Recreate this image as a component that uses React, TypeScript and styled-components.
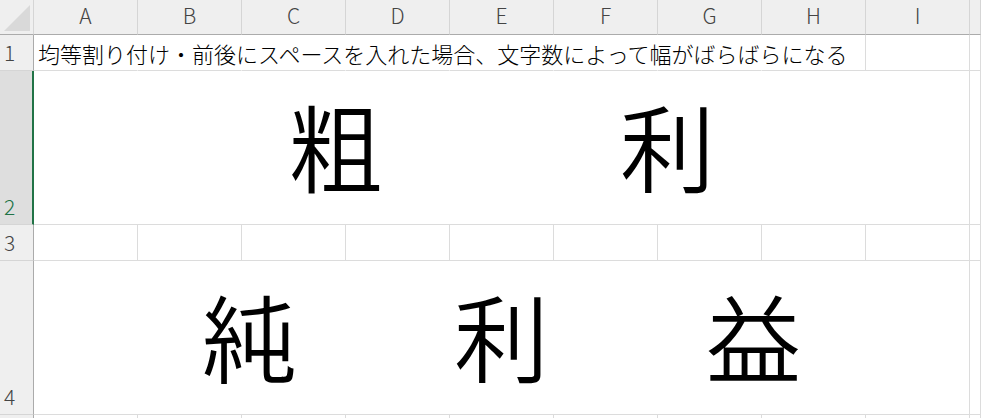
import React from "react";
import styled, { createGlobalStyle } from "styled-components";

const GlobalStyle = createGlobalStyle`
  html, body { margin: 0; padding: 0; background: #ffffff; }
  body { font-family: "Noto Sans CJK JP", "Noto Sans", sans-serif; }
  #root { width: 981px; height: 418px; overflow: hidden; }
`;

const GRID = "#dcdcdc";
const HEAD_BG = "#efefef";
const HEAD_LINE = "#ababab";
const GREEN = "#217346";

const Sheet = styled.div`
  display: grid;
  grid-template-columns: 34px repeat(9, 104px) 1fr;
  grid-template-rows: 35px 36px 154px 36px 154px 1fr;
  width: 981px;
  height: 418px;
  overflow: hidden;
`;

const Corner = styled.div`
  background: ${HEAD_BG};
  border-right: 1px solid #d5d5d5;
  border-bottom: 1px solid ${HEAD_LINE};
  box-sizing: border-box;
  display: flex;
  align-items: flex-end;
  justify-content: flex-end;
  padding: 0 3px 3px 0;
`;

const ColHeader = styled.div`
  background: ${HEAD_BG};
  border-right: 1px solid #d5d5d5;
  border-bottom: 1px solid ${HEAD_LINE};
  box-sizing: border-box;
  display: flex;
  align-items: center;
  justify-content: center;
  padding-bottom: 3px;
  font-size: 21px;
  font-weight: 300;
  line-height: 1;
  color: #444444;
`;

const RowHeader = styled.div<{ $selected?: boolean }>`
  background: ${(p) => (p.$selected ? "#dedede" : HEAD_BG)};
  border-right: ${(p) => (p.$selected ? `2px solid ${GREEN}` : `1px solid ${HEAD_LINE}`)};
  border-bottom: 1px solid #d5d5d5;
  box-sizing: border-box;
  display: flex;
  align-items: flex-end;
  padding: 0 0 7px 4px;
  font-size: 21px;
  font-weight: 300;
  line-height: 1;
  color: ${(p) => (p.$selected ? GREEN : "#444444")};
`;

const Cell = styled.div<{ $noRight?: boolean }>`
  border-right: 1px solid ${(p) => (p.$noRight ? "transparent" : GRID)};
  border-bottom: 1px solid ${GRID};
  box-sizing: border-box;
  min-width: 0;
`;

const TextCell = styled(Cell)`
  display: flex;
  align-items: center;
  padding-left: 4px;
  white-space: nowrap;
  overflow: visible;
  font-size: 22px;
  font-weight: 300;
  line-height: 1;
  color: #000000;
`;

const MergedCell = styled.div<{ $pad: number }>`
  grid-column: span 9;
  border-right: 1px solid ${GRID};
  border-bottom: 1px solid ${GRID};
  box-sizing: border-box;
  display: flex;
  align-items: center;
  justify-content: space-between;
  padding: 0 ${(p) => p.$pad}px 6px;
`;

const BigChar = styled.span`
  font-size: 95px;
  font-weight: 350;
  line-height: 1;
  color: #000000;
`;

const CornerMark = () => (
  <svg width="26" height="26" viewBox="0 0 26 26">
    <polygon points="0,26 26,26 26,0" fill="#d9d9d9" />
  </svg>
);

const COLS = ["A", "B", "C", "D", "E", "F", "G", "H", "I"];

export default function App() {
  return (
    <>
      <GlobalStyle />
      <Sheet>
        <Corner>
          <CornerMark />
        </Corner>
        {COLS.map((c) => (
          <ColHeader key={c}>{c}</ColHeader>
        ))}
        <ColHeader />

        <RowHeader>1</RowHeader>
        <TextCell $noRight>
          均等割り付け・前後にスペースを入れた場合、文字数によって幅がばらばらになる
        </TextCell>
        {["B", "C", "D", "E", "F", "G"].map((c) => (
          <Cell key={c} $noRight />
        ))}
        <Cell />
        <Cell />
        <Cell />

        <RowHeader $selected>2</RowHeader>
        <MergedCell $pad={254}>
          <BigChar>粗</BigChar>
          <BigChar>利</BigChar>
        </MergedCell>
        <Cell />

        <RowHeader>3</RowHeader>
        {COLS.map((c) => (
          <Cell key={c} />
        ))}
        <Cell />

        <RowHeader>4</RowHeader>
        <MergedCell $pad={168}>
          <BigChar>純</BigChar>
          <BigChar>利</BigChar>
          <BigChar>益</BigChar>
        </MergedCell>
        <Cell />

        <RowHeader />
        {COLS.map((c) => (
          <Cell key={c} />
        ))}
        <Cell />
      </Sheet>
    </>
  );
}
